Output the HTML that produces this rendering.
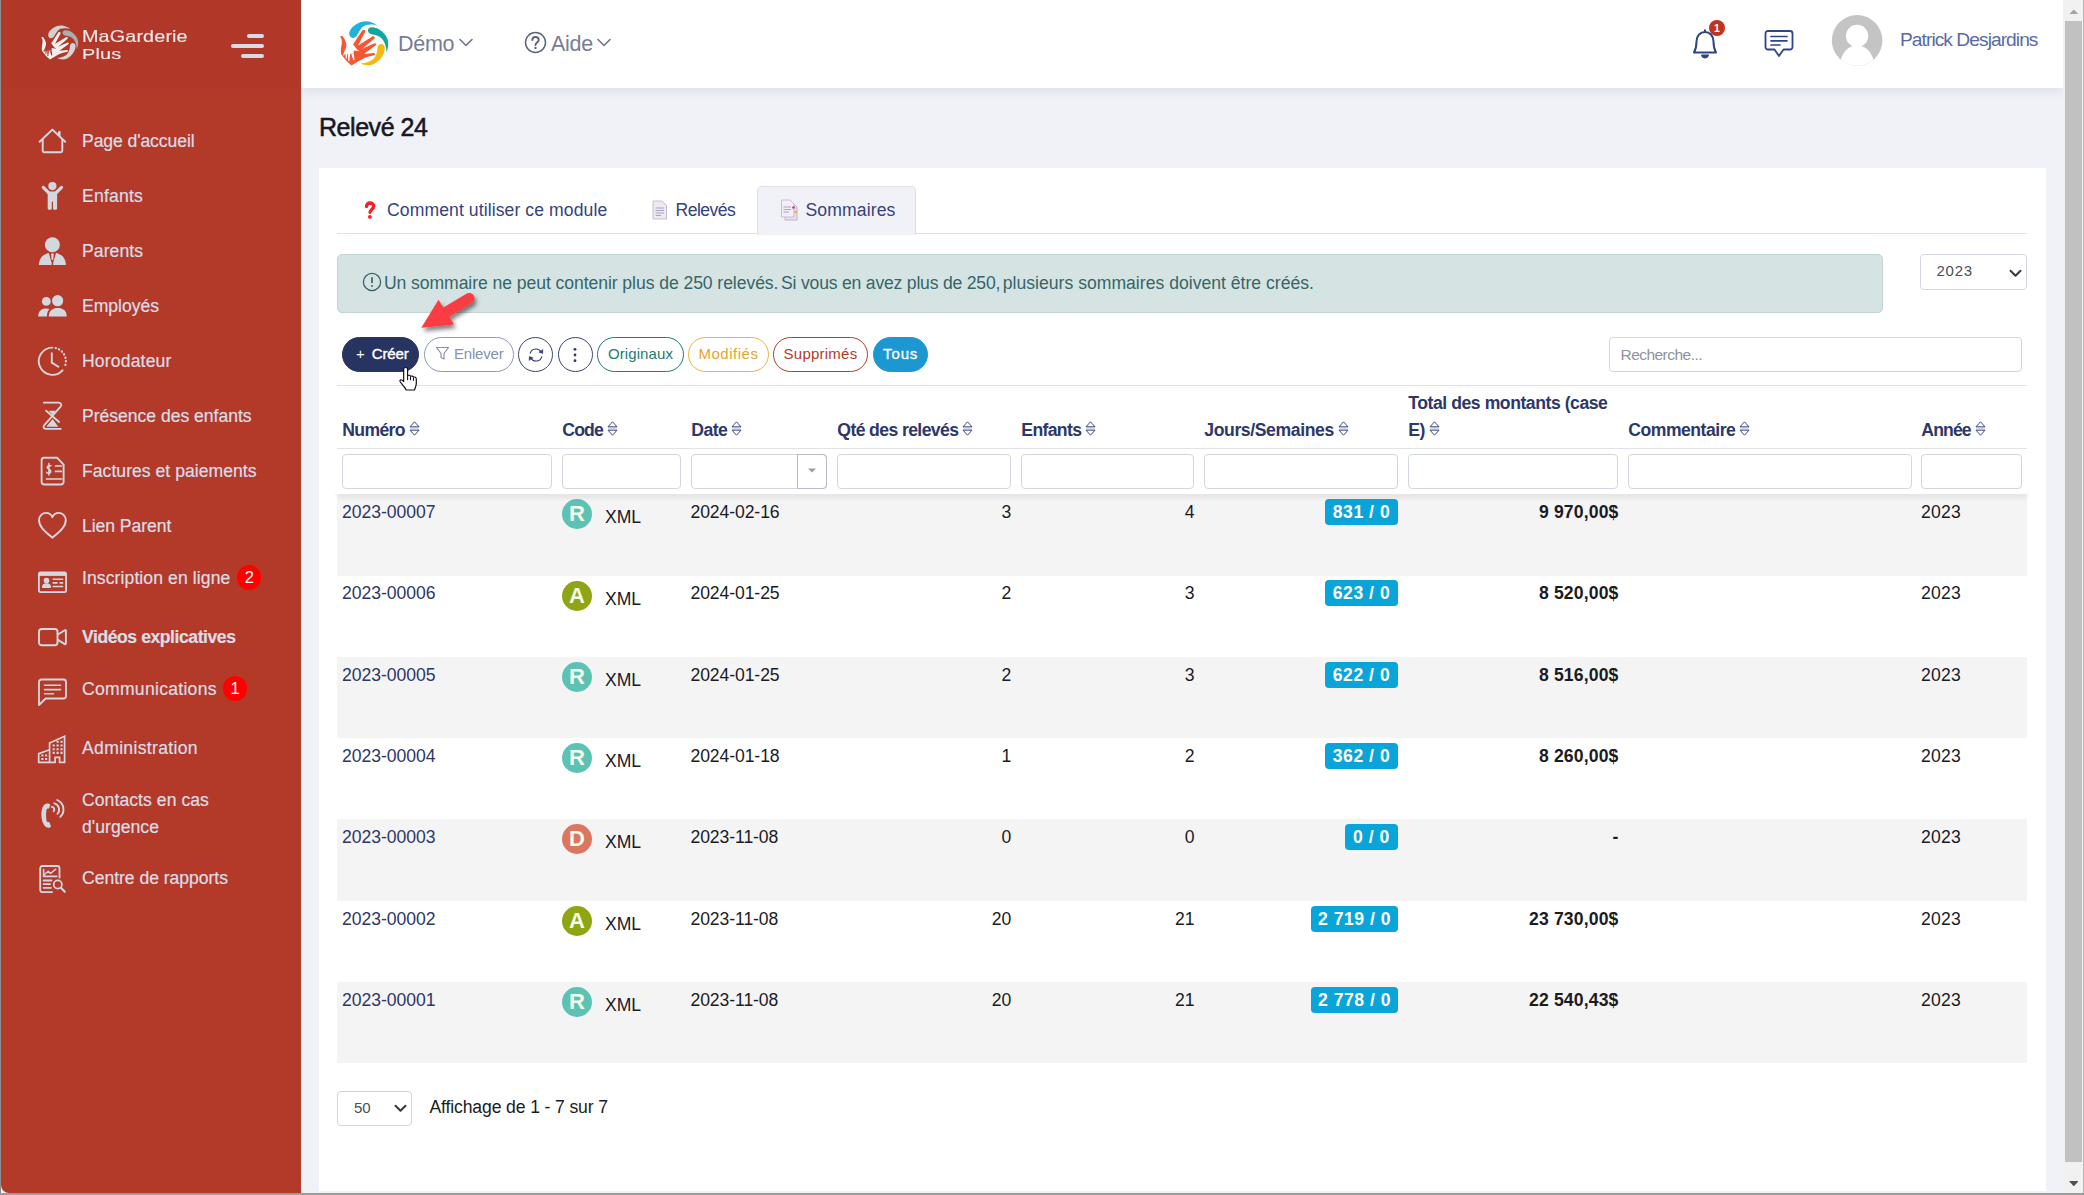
<!DOCTYPE html>
<html lang="fr">
<head>
<meta charset="utf-8">
<title>Relevé 24</title>
<style>
*{box-sizing:border-box;margin:0;padding:0}
html,body{width:2084px;height:1195px;overflow:hidden;background:#f1f2f7;font-family:"Liberation Sans",sans-serif;}
body{position:relative}
.abs{position:absolute}
/* window edges */
#edgeL{left:0;top:0;width:1px;height:1195px;background:#8d8f92}
#edgeR{left:2083px;top:0;width:1px;height:1195px;background:#b9b9b9}
#edgeB{left:0;top:1193px;width:2084px;height:2px;background:#9c9c9c}
/* sidebar */
#side{left:1px;top:0;width:300px;height:1193px;background:#b33a29;border-bottom-left-radius:8px}
#sideTop{left:1px;top:0;width:300px;height:88px;background:#b13828}
.mi{position:absolute;left:82px;color:#dadde7;-webkit-text-stroke:.2px #dadde7;font-size:17.6px;white-space:nowrap;line-height:27px;letter-spacing:-0.25px}
.mi b{font-weight:700}
.ic{position:absolute}
.bdg{position:absolute;width:24px;height:25px;border-radius:12.500px;background:#ff0000;color:#fff;font-size:16.500px;line-height:25px;text-align:center}
/* header */
#hdr{left:301px;top:0;width:1762px;height:88px;background:#fff;box-shadow:0 2px 12px rgba(60,70,110,.13)}
.ht{position:absolute;color:#787d93;font-size:22px;white-space:nowrap;line-height:26px}
/* scrollbar */
#sbTrack{left:2063px;top:0;width:21px;height:1192px;background:#f1f1f1}
#sbThumb{left:2065px;top:21px;width:17px;height:1141px;background:#c1c1c1}
/* content */
#title{left:319px;top:110.500px;font-size:25px;line-height:32px;color:#181823;font-weight:400;-webkit-text-stroke:.55px #181823;white-space:nowrap;letter-spacing:-0.45px}
#card{left:319px;top:168px;width:1727px;height:1023px;background:#fff}
</style>
</head>
<body>
<div id="card" class="abs"></div>
<div id="hdr" class="abs"></div>
<div id="side" class="abs"></div>
<div id="sideTop" class="abs"></div>
<div id="sbTrack" class="abs"></div>
<div id="sbThumb" class="abs"></div>
<!--SIDEBAR-->
<!-- sidebar logo -->
<svg class="abs" style="left:34.630px;top:20.090px" width="49.150" height="44.540" viewBox="0 0 64 58">
<path d="M17.200 19.600 C17.500 15 22 10.500 29 7.900 C33 6.600 38 7 41.700 9.200 C43.500 10.200 44.600 11 45.400 11.900 C42.500 10.300 37 10.200 33 11.500 C29.500 13 27.500 17 25.200 21 C24 23.300 21.500 24.600 19.500 23.500 C18 22.700 17.100 21.300 17.200 19.600Z" fill="#cfd0d0"/>
<path d="M35.900 16.500 C35.900 14.500 37.500 13.200 39.500 13.200 C46 13.300 52 17.500 54.800 23.500 C57 28 56.500 34 54.400 38.100 C54.300 33 53 28 50 24.700 C47 21.500 43 20.800 39.500 20.200 C37.500 19.800 35.900 18.500 35.900 16.500Z" fill="#a9adae"/>
<path d="M49 30 C51 30 52.800 31.500 52.800 34 C52.800 40 48.500 46.500 42 50 C37.500 52.200 32 51.300 28.600 49.500 C33 49.300 38 47.800 41.500 44.800 C44.500 42 45.200 38 45.500 34 C45.700 31.800 47 30 49 30Z" fill="#d4d4d4"/>
<path d="M9.200 22.100 C10 21.700 11 22.400 11.500 23.400 C13.500 26.500 14.600 29.500 14.300 31.800 C14 34.500 12.500 37.500 11.400 40.300 L21.600 39.800 L21.800 36.400 L27.700 37.300 C26 36.500 24.500 35 23.500 33.500 L21.100 30.300 L30.400 16.200 C31.200 15 33.900 16 33.300 17.500 L26 31.400 L40.800 22.300 C42 21.600 43.500 23.500 42.500 24.500 L30.200 34.800 L42.500 29.300 C44 28.800 44.800 30.800 43.500 31.500 L31.800 40 L41.700 39 C43.300 38.900 43.500 41 41.900 41.300 L34 43.200 C31 44.500 28.500 46 26.700 47.100 L19.400 51.500 L14.100 46.600 L9.200 40.300 C8.500 37 9 33 9.800 29.500 C10.200 27 9.500 24.500 8.300 23.100 C8.300 22.600 8.700 22.200 9.200 22.100Z" fill="#f1f0f0"/>
<path d="M11.200 40 L12.900 38.800 L12.300 41.300 L11.300 41.800Z M13.400 39.200 L15.400 39.400 L14.800 44.400 L13.800 44.400Z M16 39.600 L18.200 39.600 L17.300 46.900 L16.200 46.900Z M19.400 39.900 L21.700 39.700 L22.600 45.800 L21.200 46.200Z" fill="#b13828"/>
</svg>
<div class="abs" style="left:82px;top:28.200px;color:#ece6e6;font-size:16.500px;line-height:16.300px;letter-spacing:.1px;-webkit-text-stroke:.15px #ece6e6;transform-origin:0 0;transform:scaleX(1.2);white-space:nowrap">MaGarderie</div>
<div class="abs" style="left:82px;top:45.600px;color:#ece6e6;font-size:15.300px;line-height:16px;letter-spacing:.1px;-webkit-text-stroke:.15px #ece6e6;transform-origin:0 0;transform:scaleX(1.3);white-space:nowrap">Plus</div>
<div class="abs" style="left:247px;top:34px;width:17px;height:4px;border-radius:2px;background:#d5dce6"></div>
<div class="abs" style="left:231px;top:44px;width:33px;height:4px;border-radius:2px;background:#d5dce6"></div>
<div class="abs" style="left:241px;top:54px;width:23px;height:4px;border-radius:2px;background:#d5dce6"></div>

<!-- menu text -->
<div class="mi" style="top:128px;letter-spacing:-0.099px">Page d'accueil</div>
<div class="mi" style="top:183px;letter-spacing:0.188px">Enfants</div>
<div class="mi" style="top:238px;letter-spacing:0.077px">Parents</div>
<div class="mi" style="top:293px;letter-spacing:-0.036px">Employés</div>
<div class="mi" style="top:348px;letter-spacing:0.152px">Horodateur</div>
<div class="mi" style="top:403px;letter-spacing:-0.031px">Présence des enfants</div>
<div class="mi" style="top:458px;letter-spacing:0.026px">Factures et paiements</div>
<div class="mi" style="top:513px;letter-spacing:-0.07px">Lien Parent</div>
<div class="mi" style="top:565px;letter-spacing:0.083px">Inscription en ligne</div>
<div class="mi" style="top:624px;letter-spacing:-0.446px;font-weight:700">Vidéos explicatives</div>
<div class="mi" style="top:676px;letter-spacing:0.267px">Communications</div>
<div class="mi" style="top:735px;letter-spacing:0.317px">Administration</div>
<div class="mi" style="top:787px;letter-spacing:0.053px">Contacts en cas</div>
<div class="mi" style="top:814px;letter-spacing:0.033px">d'urgence</div>
<div class="mi" style="top:865px;letter-spacing:-0.041px">Centre de rapports</div>

<div class="bdg" style="left:237.300px;top:564.800px">2</div>
<div class="bdg" style="left:223px;top:675.800px">1</div>

<!-- icons -->
<!-- home -->
<svg class="ic" style="left:37px;top:126px" width="31" height="30" viewBox="0 0 31 30" fill="none" stroke="#d3d7e0" stroke-width="1.900" stroke-linejoin="round" stroke-linecap="round">
  <path d="M2.600 15.800 L15.400 3.600 L28.200 15.800"/><path d="M5.700 13.500 V24.800 A1.500 1.500 0 0 0 7.200 26.300 H23.800 A1.500 1.500 0 0 0 25.300 24.800 V13.500"/><path d="M22.300 9.800 V5.200" stroke-width="2.600" stroke-linecap="butt"/>
</svg>
<!-- child -->
<svg class="ic" style="left:37px;top:181px" width="31" height="30" viewBox="0 0 31 30" fill="#d3d7e0">
  <circle cx="15.400" cy="5.100" r="4.100"/>
  <path d="M6.300 6.400 L12.500 12.600 M24.500 6.400 L18.300 12.600" stroke="#d3d7e0" stroke-width="3.200" stroke-linecap="round"/>
  <path d="M10.700 10.500 H20.100 V27.400 A1.400 1.400 0 0 1 18.700 28.800 H17.400 A1.400 1.400 0 0 1 16 27.400 V20.700 H14.800 V27.400 A1.400 1.400 0 0 1 13.400 28.800 H12.100 A1.400 1.400 0 0 1 10.700 27.400Z"/>
</svg>
<!-- parent -->
<svg class="ic" style="left:37px;top:236px" width="31" height="30" viewBox="0 0 31 30" fill="#d3d7e0">
  <circle cx="15.400" cy="8.700" r="7.500"/>
  <path d="M1.900 29 C2.400 21 6.400 18.300 11.800 17 L14.600 26.800 V29Z"/>
  <path d="M28.900 29 C28.400 21 24.400 18.300 19 17 L16.200 26.800 V29Z"/>
  <path d="M14 17.400 H16.800 L16.200 24 H14.600Z"/>
</svg>
<!-- employees -->
<svg class="ic" style="left:37px;top:291px" width="32" height="30" viewBox="0 0 32 30" fill="#d3d7e0">
  <circle cx="9.300" cy="10.400" r="4.400"/>
  <circle cx="20.600" cy="9.700" r="5.600"/>
  <path d="M11.800 25.400 C11.800 19.500 15.500 16.900 20.700 16.900 C26 16.900 29.700 19.500 29.700 25.400Z"/>
  <path d="M1.200 25.400 C1.200 20 4.500 17.400 9.300 17.400 C10.500 17.400 11.600 17.600 12.500 17.900 C10.700 19.600 10 22 9.900 25.400Z"/>
</svg>
<!-- clock -->
<svg class="ic" style="left:37px;top:346px" width="31" height="31" viewBox="0 0 31 31" fill="none" stroke="#d3d7e0" stroke-width="1.900" stroke-linecap="round">
  <path d="M15.400 1.600 A13.600 13.600 0 1 0 25.500 24.300"/>
  <path d="M18.600 2 A13.600 13.600 0 0 1 27.400 21.500" stroke-dasharray="0.300 3.250" stroke-width="2.200"/>
  <path d="M14.800 7.200 V16.600 L21.400 20.700"/>
</svg>
<!-- hourglass -->
<svg class="ic" style="left:37px;top:401px" width="30" height="30" viewBox="0 0 30 30" fill="none" stroke="#d3d7e0" stroke-width="1.800" stroke-linejoin="round" stroke-linecap="round">
  <path d="M6.800 1.700 H21.500 C24 1.700 25 3.600 23.800 5.300 L7.100 24.300 C5.800 26 6.800 27.900 9 27.900 H23.800"/>
  <path d="M9.100 9.700 L22.100 21"/>
  <path d="M11.800 9.700 H19.100 L15.600 14.100Z M15.600 18.100 L21.300 25.800 H9.300Z" fill="#d3d7e0" stroke="none"/>
</svg>
<!-- invoice -->
<svg class="ic" style="left:37px;top:456px" width="31" height="30" viewBox="0 0 31 30" fill="none" stroke="#d3d7e0" stroke-width="1.900" stroke-linejoin="round" stroke-linecap="round">
  <path d="M7.100 1.700 H20 L26.600 8.600 V26 A2.500 2.500 0 0 1 24.100 28.500 H7.100 A2.500 2.500 0 0 1 4.600 26 V4.200 A2.500 2.500 0 0 1 7.100 1.700Z"/>
  <path d="M9.500 23 H24.500" stroke-width="1.700"/><path d="M18.500 10 H24.300 M18.500 15.400 H24.300" stroke-width="1.700"/>
  <path d="M14 9.800 C11.200 8.600 9.300 10.800 10.800 12.500 C12 13.500 14.300 14 13.600 16.200 C12.800 17.800 10.300 17.600 9.600 16.400 M11.900 7.400 V19" stroke-width="1.500"/>
</svg>
<!-- heart -->
<svg class="ic" style="left:37px;top:511px" width="31" height="30" viewBox="0 0 31 30" fill="none" stroke="#d3d7e0" stroke-width="1.900" stroke-linejoin="round">
  <path d="M15.400 26.800 C10 22 2 16.500 2 9.300 C2 4.600 5.600 1.900 9 1.900 C11.800 1.900 14.200 3.500 15.400 6.200 C16.600 3.500 19 1.900 21.800 1.900 C25.200 1.900 28.800 4.600 28.800 9.300 C28.800 16.500 20.800 22 15.400 26.800Z"/>
</svg>
<!-- id card -->
<svg class="ic" style="left:37px;top:566px" width="31" height="30" viewBox="0 0 31 30" fill="none" stroke="#d3d7e0" stroke-width="1.800" stroke-linejoin="round">
  <rect x="1.900" y="6.400" width="27.200" height="19.800" rx="1.600"/>
  <path d="M1.900 8.400 H29.100" stroke-width="3"/>
  <circle cx="9.500" cy="14.600" r="2.800" fill="#d3d7e0" stroke="none"/>
  <path d="M4.900 21.300 C4.900 18.400 6.600 17.200 9.500 17.200 C12.400 17.200 14.100 18.400 14.100 21.300 A.8 .8 0 0 1 13.300 22.100 H5.700 A.8 .8 0 0 1 4.900 21.300Z" fill="#d3d7e0" stroke="none"/>
  <path d="M15.600 13.200 H26.200 M15.600 16.900 H20.500 M22.500 16.900 H26.200 M15.600 20.500 H26.200" stroke-width="1.600"/>
</svg>
<!-- video -->
<svg class="ic" style="left:37px;top:622px" width="31" height="30" viewBox="0 0 31 30" fill="none" stroke="#d3d7e0" stroke-width="1.900" stroke-linejoin="round">
  <rect x="2" y="7" width="18.500" height="16.300" rx="2.800"/>
  <path d="M20.500 12.700 L27.800 8.200 C28.300 7.900 28.900 8.200 28.900 8.700 V21.600 C28.900 22.100 28.300 22.400 27.800 22.100 L20.500 17.600"/>
</svg>
<!-- chat -->
<svg class="ic" style="left:37px;top:677px" width="31" height="30" viewBox="0 0 31 30" fill="none" stroke="#d3d7e0" stroke-width="1.800" stroke-linejoin="round" stroke-linecap="round">
  <path d="M4.500 2.500 H26.500 A2.500 2.500 0 0 1 29 5 V19 A2.500 2.500 0 0 1 26.500 21.500 H8.700 L2 28 V5 A2.500 2.500 0 0 1 4.500 2.500Z"/>
  <path d="M7.500 8.300 H23.500 M7.500 12.600 H23.500 M7.500 16.800 H16.500" stroke-width="1.600"/>
</svg>
<!-- buildings -->
<svg class="ic" style="left:37px;top:733.700px" width="30" height="30" viewBox="0 0 30 30" fill="none" stroke="#d3d7e0" stroke-width="1.700" stroke-linejoin="miter">
  <path d="M12.600 28.300 V9 L27.600 2.200 V28.300 H22.600 V23.300 H18.100 V28.300Z"/>
  <path d="M12.600 15.800 L1.700 19.600 V28.300 H12.600"/>
  <path d="M15.600 11.500 h2.200 M19.500 11.500 h2.200 M23.400 11.500 h2.200 M15.600 15.200 h2.200 M19.500 15.200 h2.200 M23.400 15.200 h2.200 M15.600 18.900 h2.200 M19.500 18.900 h2.200 M23.400 18.900 h2.200 M19.500 7.800 h2.200 M23.400 7.800 h2.200 M4.300 21.500 h2.200 M8 21.500 h2.200 M4.300 25 h2.200 M8 25 h2.200" stroke-width="2.100"/>
</svg>
<!-- phone -->
<svg class="ic" style="left:37px;top:798px" width="31" height="32" viewBox="0 0 31 32" fill="none" stroke="#d3d7e0" stroke-width="1.900" stroke-linecap="round">
  <path d="M10 5.600 C6.500 6 4.400 10.500 4.400 16.500 C4.400 23 6.800 28.500 10.300 29.600 C11.800 30 13.400 29.600 14 28.500 L12.200 23.800 C11.200 24.500 10 24.200 9.600 22.800 C8.900 20 8.900 14.500 9.600 11.800 C9.900 10.700 11 10.300 12 10.800 L13.300 6.400 C12.600 5.800 11.200 5.500 10 5.600Z" fill="#d3d7e0" stroke="none"/>
  <path d="M14.800 8.900 A2.600 2.600 0 0 1 16.700 13.200"/>
  <path d="M17.300 5.300 A6.400 6.400 0 0 1 20.400 15.800"/>
  <path d="M20.200 2 A10.300 10.300 0 0 1 23.300 18.900"/>
</svg>
<!-- report -->
<svg class="ic" style="left:37px;top:864px" width="31" height="31" viewBox="0 0 31 31" fill="none" stroke="#d3d7e0" stroke-width="1.800" stroke-linejoin="round" stroke-linecap="round">
  <path d="M22.500 13.500 V4.200 A2.200 2.200 0 0 0 20.300 2 H5.400 A2.200 2.200 0 0 0 3.200 4.200 V26 A2.200 2.200 0 0 0 5.400 28.200 H15"/>
  <path d="M6.600 5.500 V12.400 H19.800" stroke-width="1.600"/><path d="M7.500 10.500 L11.200 7.300 L13.500 9.500 L18.800 5.200" stroke-width="1.500"/>
  <path d="M6.600 16.500 H14.500 M6.600 20.200 H13 M6.600 23.800 H14" stroke-width="1.800"/>
  <circle cx="20.800" cy="20.500" r="4.100" stroke-width="1.700"/><path d="M23.900 23.800 L27.800 27.800" stroke-width="2.100"/>
</svg>
<!--/SIDEBAR-->
<!--HEADER-->
<!-- header logo (colour) -->
<svg class="abs" style="left:332px;top:14px" width="64" height="58" viewBox="0 0 64 58">
<path d="M17.200 19.600 C17.500 15 22 10.500 29 7.900 C33 6.600 38 7 41.700 9.200 C43.500 10.200 44.600 11 45.400 11.900 C42.500 10.300 37 10.200 33 11.500 C29.500 13 27.500 17 25.200 21 C24 23.300 21.500 24.600 19.500 23.500 C18 22.700 17.100 21.300 17.200 19.600Z" fill="#22b2d8"/>
<path d="M35.900 16.500 C35.900 14.500 37.500 13.200 39.500 13.200 C46 13.300 52 17.500 54.800 23.500 C57 28 56.500 34 54.400 38.100 C54.300 33 53 28 50 24.700 C47 21.500 43 20.800 39.500 20.200 C37.500 19.800 35.900 18.500 35.900 16.500Z" fill="#0fa7a0"/>
<path d="M49 30 C51 30 52.800 31.500 52.800 34 C52.800 40 48.500 46.500 42 50 C37.500 52.200 32 51.300 28.600 49.500 C33 49.300 38 47.800 41.500 44.800 C44.500 42 45.200 38 45.500 34 C45.700 31.800 47 30 49 30Z" fill="#f5b910"/>
<path d="M9.200 22.100 C10 21.700 11 22.400 11.500 23.400 C13.500 26.500 14.600 29.500 14.300 31.800 C14 34.500 12.500 37.500 11.400 40.300 L21.600 39.800 L21.800 36.400 L27.700 37.300 C26 36.500 24.500 35 23.500 33.500 L21.100 30.300 L30.400 16.200 C31.200 15 33.900 16 33.300 17.500 L26 31.400 L40.800 22.300 C42 21.600 43.500 23.500 42.500 24.500 L30.200 34.800 L42.500 29.300 C44 28.800 44.800 30.800 43.500 31.500 L31.800 40 L41.700 39 C43.300 38.900 43.500 41 41.900 41.300 L34 43.200 C31 44.500 28.500 46 26.700 47.100 L19.400 51.500 L14.100 46.600 L9.200 40.300 C8.500 37 9 33 9.800 29.500 C10.200 27 9.500 24.500 8.300 23.100 C8.300 22.600 8.700 22.200 9.200 22.100Z" fill="#fb5430"/>
<path d="M11.200 40 L12.900 38.800 L12.300 41.300 L11.300 41.800Z M13.400 39.200 L15.400 39.400 L14.800 44.400 L13.800 44.400Z M16 39.600 L18.200 39.600 L17.300 46.900 L16.200 46.900Z M19.400 39.900 L21.700 39.700 L22.600 45.800 L21.200 46.200Z" fill="#ffffff"/>
</svg>
<div class="ht" style="left:398px;top:31px;font-size:21.5px;letter-spacing:-.3px">Démo</div>
<svg class="abs" style="left:458px;top:37px" width="16" height="11" viewBox="0 0 16 11" fill="none" stroke="#6e7389" stroke-width="1.600" stroke-linecap="round" stroke-linejoin="round"><path d="M2 2.500 L8 8.500 L14 2.500"/></svg>
<svg class="abs" style="left:524px;top:31px" width="23" height="23" viewBox="0 0 23 23" fill="none" stroke="#5d637c" stroke-width="1.500"><circle cx="11.500" cy="11.500" r="10"/><path d="M8.300 9 C8.300 5 14.700 5 14.700 9 C14.700 11.500 11.500 11.500 11.500 14" stroke-width="1.900" stroke-linecap="round"/><circle cx="11.500" cy="17" r="1.200" fill="#5d637c" stroke="none"/></svg>
<div class="ht" style="left:551px;top:31px;font-size:21.5px;letter-spacing:-.3px">Aide</div>
<svg class="abs" style="left:596px;top:37px" width="16" height="11" viewBox="0 0 16 11" fill="none" stroke="#6e7389" stroke-width="1.600" stroke-linecap="round" stroke-linejoin="round"><path d="M2 2.500 L8 8.500 L14 2.500"/></svg>

<!-- bell -->
<svg class="abs" style="left:1691px;top:28px" width="28" height="32" viewBox="0 0 28 32" fill="none" stroke="#2f4584" stroke-width="2" stroke-linejoin="round" stroke-linecap="round">
  <path d="M3 24.500 H25 C23 21 22.500 17 22.500 13.500 C22.500 7.500 18.500 4 14 4 C9.500 4 5.500 7.500 5.500 13.500 C5.500 17 5 21 3 24.500Z"/>
  <path d="M14 4 V2.300"/>
  <path d="M11 27.500 C12 30 16 30 17 27.500Z" fill="#2f4584"/>
</svg>
<div class="abs" style="left:1708.800px;top:19.800px;width:16.400px;height:16.400px;border-radius:9px;background:#bf3323;color:#fff;font-size:10.500px;font-weight:700;line-height:16.400px;text-align:center">1</div>
<!-- chat -->
<svg class="abs" style="left:1763px;top:28px" width="32" height="31" viewBox="0 0 32 31" fill="none" stroke="#2f4584" stroke-width="1.800" stroke-linejoin="round" stroke-linecap="round">
  <path d="M5 3 H27 A2.500 2.500 0 0 1 29.500 5.500 V19 A2.500 2.500 0 0 1 27 21.500 H20.500 L16 28 L11.500 21.500 H5 A2.500 2.500 0 0 1 2.500 19 V5.500 A2.500 2.500 0 0 1 5 3Z"/>
  <path d="M8 8.500 H24 M8 12.800 H24 M8 17 H17" stroke-width="1.700"/>
</svg>
<!-- avatar -->
<svg class="abs" style="left:1831px;top:15px" width="52" height="52" viewBox="0 0 52 52">
  <defs><clipPath id="av"><circle cx="26.100" cy="25.400" r="25.300"/></clipPath></defs>
  <circle cx="26.100" cy="25.400" r="25.300" fill="#c4c4c4"/>
  <g clip-path="url(#av)"><circle cx="26.100" cy="20.900" r="11.100" fill="#fff"/><path d="M8.500 56 C8.500 40 15 30.800 26.100 30.800 C37.200 30.800 43.700 40 43.700 56Z" fill="#fff"/></g>
</svg>
<div class="abs" style="left:1900px;top:28px;font-size:19.200px;line-height:24px;color:#5a6ba4;white-space:nowrap;letter-spacing:-.95px">Patrick Desjardins</div>
<!-- scrollbar arrows -->
<svg class="abs" style="left:2068.700px;top:8.600px" width="9.600" height="5.400" viewBox="0 0 13 7" preserveAspectRatio="none"><path d="M0 7 L6.500 0.500 L13 7Z" fill="#a3a3a3"/></svg>
<svg class="abs" style="left:2068.700px;top:1180.800px" width="9.600" height="5.400" viewBox="0 0 11 6" preserveAspectRatio="none"><path d="M0 0 L5.500 6 L11 0Z" fill="#505050"/></svg>
<!--/HEADER-->
<div id="title" class="abs">Relevé 24</div>
<!--TABS-->

<style>
.tab{position:absolute;top:186px;height:48px;font-size:17.600px;line-height:48px;color:#36427b;white-space:nowrap}
#tabline{left:337px;top:233px;width:1690px;height:1px;background:#dfe2ea}
#tabact{left:757px;top:186px;width:159px;height:49px;background:#f1f2f7;border:1px solid #dcdfe8;border-bottom:none;border-radius:5px 5px 0 0}
#alert{left:337px;top:254px;width:1546px;height:59px;background:#d5e4e2;border:1px solid #bfd6d2;border-radius:5px}
.atx{top:269.500px;font-size:17.600px;line-height:27px;color:#36656a;white-space:nowrap}
.sel{position:absolute;background:#fff;border:1px solid #d3d6de;border-radius:4px;color:#4a4f57;font-size:15px}
.btn{position:absolute;top:337px;height:35px;border-radius:18px;font-size:15px;line-height:31.500px;text-align:center;white-space:nowrap;border:1px solid;background:#fff}
#search{left:1609px;top:337px;width:413px;height:35px;border:1px solid #d3d6de;border-radius:4px;background:#fff;color:#8e939c;font-size:15.500px;line-height:34px;padding-left:10.500px}
.hl{position:absolute;left:337px;width:1690px;height:1px;background:#dfe2ea}
.th{position:absolute;font-size:17.600px;font-weight:700;color:#2d3769;white-space:nowrap;line-height:27px}
.th .si{margin-left:4px;vertical-align:-.3px;letter-spacing:0}
.fi{position:absolute;top:454px;height:35px;border:1px solid #d3d6de;border-radius:4px;background:#fff}
.row{position:absolute;left:337px;width:1690px;background:#f4f4f4}
.td{position:absolute;font-size:17.600px;line-height:26px;color:#1b1b24;white-space:nowrap}
.td.r{text-align:right}
.td.b{font-weight:700}
.num{color:#2d3769}
.circ{position:absolute;left:562px;width:30px;height:30px;border-radius:15px;color:#f3fbe9;font-weight:700;font-size:22px;line-height:30.500px;text-align:center}
.bd{position:absolute;height:26px;border-radius:4px;background:#0aa5d8;color:#fff;font-weight:700;font-size:17.600px;line-height:26.500px;text-align:center;white-space:nowrap}
#hshadow{left:337px;top:490px;width:1690px;height:4px;box-shadow:0 3px 5px rgba(0,0,0,.1);background:#fff}
</style>

<div id="tabline" class="abs"></div>
<div id="tabact" class="abs"></div>
<svg class="abs" style="left:363px;top:200px" width="14" height="20" viewBox="0 0 14 20" fill="none"><path d="M3.500 6.500 C3.500 4.200 5 3 7 3 C9.200 3 10.700 4.400 10.700 6.300 C10.700 9.300 7 9.600 7 12.300" stroke="#fb1f24" stroke-width="3.300" stroke-linecap="round"/><circle cx="6.900" cy="16.900" r="1.900" fill="#fb1f24"/></svg>
<div class="tab" style="left:387px;letter-spacing:0.086px">Comment utiliser ce module</div>
<svg class="abs" style="left:651px;top:200px" width="17" height="20" viewBox="0 0 17 20"><path d="M2 1 H11 L15.500 5.500 V19 H2Z" fill="#efe9f4" stroke="#c6bdd4" stroke-width="1"/><path d="M4.500 8 H13 M4.500 10.500 H13 M4.500 13 H13 M4.500 15.500 H10" stroke="#a9a4bb" stroke-width="1"/></svg>
<div class="tab" style="left:675.500px;letter-spacing:-0.530px">Relevés</div>
<svg class="abs" style="left:780px;top:199px" width="19" height="22" viewBox="0 0 19 22"><path d="M5 4 H13 L17 8 V21 H5Z" fill="#e7dfee" stroke="#bcb2cb" stroke-width="1"/><path d="M1.500 1 H10 L14 5 V18 H1.500Z" fill="#f2edf6" stroke="#c6bdd4" stroke-width="1"/><path d="M3.500 8 H11 M3.500 10.500 H11 M3.500 13 H9" stroke="#a9a4bb" stroke-width="1"/><circle cx="13.500" cy="8.500" r="1.300" fill="#e0218a"/><circle cx="15.500" cy="13" r="1.300" fill="#f5b21a"/></svg>
<div class="tab" style="left:805.500px;letter-spacing:0.116px">Sommaires</div>
<!--/TABS-->
<!--ALERT-->

<div id="alert" class="abs"></div>
<svg class="abs" style="left:362px;top:272px" width="20" height="20" viewBox="0 0 20 20" fill="none" stroke="#36656a" stroke-width="1.300"><circle cx="10" cy="10" r="8.600"/><path d="M10 5.200 V11" stroke-width="1.700"/><circle cx="10" cy="14" r="1" fill="#36656a" stroke="none"/></svg>
<div class="abs atx" style="left:383.900px;letter-spacing:-0.072px">Un sommaire ne peut contenir plus de 250 relevés.</div>
<div class="abs atx" style="left:781.100px;letter-spacing:-0.210px">Si vous en avez plus de 250,</div>
<div class="abs atx" style="left:1002.800px;letter-spacing:0.006px">plusieurs sommaires doivent être créés.</div>
<div class="sel" style="left:1920px;top:254px;width:107px;height:36px;line-height:31.500px;padding-left:15.500px;letter-spacing:0.742px">2023</div>
<svg class="abs" style="left:2008.500px;top:268.500px" width="13" height="9" viewBox="0 0 13 9" fill="none" stroke="#343a40" stroke-width="2" stroke-linecap="round" stroke-linejoin="round"><path d="M1.500 1.800 L6.500 6.800 L11.500 1.800"/></svg>
<!--/ALERT-->
<!--TOOLBAR-->

<div class="btn" style="left:342px;width:77px;background:#273360;border-color:#273360;color:#fff;text-align:left;padding-left:13px"><span style="font-size:15px;margin-right:7px">+</span><span style="-webkit-text-stroke:.4px #fff;letter-spacing:-0.141px">Créer</span></div>
<div class="btn" style="left:424px;width:90px;border-color:#8f97bd;color:#8a90b0;text-align:left;padding-left:29px;letter-spacing:-0.186px">Enlever</div>
<svg class="abs" style="left:434.600px;top:346px" width="15" height="15" viewBox="0 0 15 15" fill="none" stroke="#8a90b0" stroke-width="1.200" stroke-linejoin="round"><path d="M1.500 1.500 H13.500 L9 7.500 V13 L6 11.500 V7.500Z"/></svg>
<div class="btn" style="left:518px;width:35px;border-color:#3b4478"></div>
<svg class="abs" style="left:526px;top:345px" width="20" height="20" viewBox="0 0 20 20" fill="none" stroke="#2d3769" stroke-width="1.100" stroke-linecap="round"><path d="M4.200 8.200 A6 6 0 0 1 15.300 7.300"/><path d="M15.800 11.800 A6 6 0 0 1 4.700 12.700"/><path d="M13.200 7.200 L16.600 8.400 L16.900 4.900Z" fill="#2d3769" stroke-width=".6"/><path d="M6.800 12.800 L3.400 11.600 L3.100 15.100Z" fill="#2d3769" stroke-width=".6"/></svg>
<div class="btn" style="left:558px;width:35px;border-color:#3b4478"></div>
<svg class="abs" style="left:572px;top:346px" width="6" height="18" viewBox="0 0 6 18" fill="#2d3769"><circle cx="3" cy="3.300" r="1.400"/><circle cx="3" cy="9" r="1.400"/><circle cx="3" cy="14.700" r="1.400"/></svg>
<div class="btn" style="left:597px;width:87px;border-color:#1f7a74;color:#1f7a74;letter-spacing:0.087px">Originaux</div>
<div class="btn" style="left:688px;width:81px;border-color:#eab839;color:#e5a531;letter-spacing:0.520px">Modifiés</div>
<div class="btn" style="left:773px;width:95px;border-color:#b7392b;color:#b7392b;letter-spacing:0.237px">Supprimés</div>
<div class="btn" style="left:873px;width:55.300px;background:#1d97d2;border-color:#1d97d2;color:#fff"><span style="-webkit-text-stroke:.3px #fff;letter-spacing:0.871px">Tous</span></div>
<div id="search" class="abs" style="letter-spacing:-0.536px">Recherche...</div>
<div class="hl" style="top:385px"></div>
<!--/TOOLBAR-->
<!--TABLE-->
<div class="th" style="left:342.3px;top:416.700px"><span style="letter-spacing:-0.657px">Numéro</span><svg class="si" width="11" height="15" viewBox="0 0 11 15" fill="none" stroke="#3d4882" stroke-width="1"><rect x="1" y="6.300" width="9" height="2.400" fill="#dcdce3" stroke="none"/><path d="M1 5.800 L5.500 0.800 L10 5.800Z"/><path d="M1 9.200 L5.500 14.200 L10 9.200Z"/></svg></div>
<div class="th" style="left:562.3px;top:416.700px"><span style="letter-spacing:-0.861px">Code</span><svg class="si" width="11" height="15" viewBox="0 0 11 15" fill="none" stroke="#3d4882" stroke-width="1"><rect x="1" y="6.300" width="9" height="2.400" fill="#dcdce3" stroke="none"/><path d="M1 5.800 L5.500 0.800 L10 5.800Z"/><path d="M1 9.200 L5.500 14.200 L10 9.200Z"/></svg></div>
<div class="th" style="left:691.3px;top:416.700px"><span style="letter-spacing:-0.580px">Date</span><svg class="si" width="11" height="15" viewBox="0 0 11 15" fill="none" stroke="#3d4882" stroke-width="1"><rect x="1" y="6.300" width="9" height="2.400" fill="#dcdce3" stroke="none"/><path d="M1 5.800 L5.500 0.800 L10 5.800Z"/><path d="M1 9.200 L5.500 14.200 L10 9.200Z"/></svg></div>
<div class="th" style="left:837.3px;top:416.700px"><span style="letter-spacing:-0.600px">Qté des relevés</span><svg class="si" width="11" height="15" viewBox="0 0 11 15" fill="none" stroke="#3d4882" stroke-width="1"><rect x="1" y="6.300" width="9" height="2.400" fill="#dcdce3" stroke="none"/><path d="M1 5.800 L5.500 0.800 L10 5.800Z"/><path d="M1 9.200 L5.500 14.200 L10 9.200Z"/></svg></div>
<div class="th" style="left:1021.3px;top:416.700px"><span style="letter-spacing:-0.639px">Enfants</span><svg class="si" width="11" height="15" viewBox="0 0 11 15" fill="none" stroke="#3d4882" stroke-width="1"><rect x="1" y="6.300" width="9" height="2.400" fill="#dcdce3" stroke="none"/><path d="M1 5.800 L5.500 0.800 L10 5.800Z"/><path d="M1 9.200 L5.500 14.200 L10 9.200Z"/></svg></div>
<div class="th" style="left:1204.3px;top:416.700px"><span style="letter-spacing:-0.389px">Jours/Semaines</span><svg class="si" width="11" height="15" viewBox="0 0 11 15" fill="none" stroke="#3d4882" stroke-width="1"><rect x="1" y="6.300" width="9" height="2.400" fill="#dcdce3" stroke="none"/><path d="M1 5.800 L5.500 0.800 L10 5.800Z"/><path d="M1 9.200 L5.500 14.200 L10 9.200Z"/></svg></div>
<div class="th" style="left:1408.3px;top:389.700px"><span style="letter-spacing:-0.447px">Total des montants (case</span><br><span style="letter-spacing:-0.594px">E)</span><svg class="si" width="11" height="15" viewBox="0 0 11 15" fill="none" stroke="#3d4882" stroke-width="1"><rect x="1" y="6.300" width="9" height="2.400" fill="#dcdce3" stroke="none"/><path d="M1 5.800 L5.500 0.800 L10 5.800Z"/><path d="M1 9.200 L5.500 14.200 L10 9.200Z"/></svg></div>
<div class="th" style="left:1628.3px;top:416.700px"><span style="letter-spacing:-0.494px">Commentaire</span><svg class="si" width="11" height="15" viewBox="0 0 11 15" fill="none" stroke="#3d4882" stroke-width="1"><rect x="1" y="6.300" width="9" height="2.400" fill="#dcdce3" stroke="none"/><path d="M1 5.800 L5.500 0.800 L10 5.800Z"/><path d="M1 9.200 L5.500 14.200 L10 9.200Z"/></svg></div>
<div class="th" style="left:1921.3px;top:416.700px"><span style="letter-spacing:-0.870px">Année</span><svg class="si" width="11" height="15" viewBox="0 0 11 15" fill="none" stroke="#3d4882" stroke-width="1"><rect x="1" y="6.300" width="9" height="2.400" fill="#dcdce3" stroke="none"/><path d="M1 5.800 L5.500 0.800 L10 5.800Z"/><path d="M1 9.200 L5.500 14.200 L10 9.200Z"/></svg></div>
<div class="hl" style="top:448px"></div>
<div class="fi" style="left:342px;width:210px"></div>
<div class="fi" style="left:562px;width:119px"></div>
<div class="fi" style="left:691px;width:136px"></div>
<div class="fi" style="left:837px;width:174px"></div>
<div class="fi" style="left:1021px;width:173px"></div>
<div class="fi" style="left:1204px;width:194px"></div>
<div class="fi" style="left:1408px;width:210px"></div>
<div class="fi" style="left:1628px;width:284px"></div>
<div class="fi" style="left:1921px;width:101px"></div>
<div class="abs" style="left:797px;top:454px;width:30px;height:35px;border:1px solid #b9bcc6;border-radius:0 4px 4px 0"></div>
<svg class="abs" style="left:808px;top:467.600px" width="8" height="5" viewBox="0 0 8 5"><path d="M0 0.500 H8 L4 4.500Z" fill="#9a9da6"/></svg>
<div class="row" style="top:494px;height:81.5px"></div>
<div class="td num" style="left:342px;top:498.8px;letter-spacing:-0.037px">2023-00007</div>
<div class="circ" style="top:499px;background:#5bc2b4">R</div>
<div class="td" style="left:605px;top:504.0px;letter-spacing:-0.044px">XML</div>
<div class="td" style="left:690.500px;top:498.8px;letter-spacing:-0.100px">2024-02-16</div>
<div class="td r" style="left:837px;width:174.300px;top:498.8px">3</div>
<div class="td r" style="left:1021px;width:173.500px;top:498.8px">4</div>
<div class="bd" style="left:1325px;width:73px;top:498.9px;letter-spacing:0.515px">831 / 0</div>
<div class="td r b" style="left:1408px;width:210.500px;top:498.8px;letter-spacing:0.140px">9 970,00$</div>
<div class="td" style="left:1921px;top:498.8px;letter-spacing:0.220px">2023</div>
<div class="td num" style="left:342px;top:580.3px;letter-spacing:-0.037px">2023-00006</div>
<div class="circ" style="top:580.5px;background:#8fa513">A</div>
<div class="td" style="left:605px;top:585.5px;letter-spacing:-0.044px">XML</div>
<div class="td" style="left:690.500px;top:580.3px;letter-spacing:-0.100px">2024-01-25</div>
<div class="td r" style="left:837px;width:174.300px;top:580.3px">2</div>
<div class="td r" style="left:1021px;width:173.500px;top:580.3px">3</div>
<div class="bd" style="left:1325px;width:73px;top:580.4px;letter-spacing:0.515px">623 / 0</div>
<div class="td r b" style="left:1408px;width:210.500px;top:580.3px;letter-spacing:0.140px">8 520,00$</div>
<div class="td" style="left:1921px;top:580.3px;letter-spacing:0.220px">2023</div>
<div class="row" style="top:657px;height:81px"></div>
<div class="td num" style="left:342px;top:661.8px;letter-spacing:-0.037px">2023-00005</div>
<div class="circ" style="top:662px;background:#5bc2b4">R</div>
<div class="td" style="left:605px;top:667.0px;letter-spacing:-0.044px">XML</div>
<div class="td" style="left:690.500px;top:661.8px;letter-spacing:-0.100px">2024-01-25</div>
<div class="td r" style="left:837px;width:174.300px;top:661.8px">2</div>
<div class="td r" style="left:1021px;width:173.500px;top:661.8px">3</div>
<div class="bd" style="left:1325px;width:73px;top:661.9px;letter-spacing:0.515px">622 / 0</div>
<div class="td r b" style="left:1408px;width:210.500px;top:661.8px;letter-spacing:0.140px">8 516,00$</div>
<div class="td" style="left:1921px;top:661.8px;letter-spacing:0.220px">2023</div>
<div class="td num" style="left:342px;top:742.8px;letter-spacing:-0.037px">2023-00004</div>
<div class="circ" style="top:743px;background:#5bc2b4">R</div>
<div class="td" style="left:605px;top:748.0px;letter-spacing:-0.044px">XML</div>
<div class="td" style="left:690.500px;top:742.8px;letter-spacing:-0.100px">2024-01-18</div>
<div class="td r" style="left:837px;width:174.300px;top:742.8px">1</div>
<div class="td r" style="left:1021px;width:173.500px;top:742.8px">2</div>
<div class="bd" style="left:1325px;width:73px;top:742.9px;letter-spacing:0.515px">362 / 0</div>
<div class="td r b" style="left:1408px;width:210.500px;top:742.8px;letter-spacing:0.140px">8 260,00$</div>
<div class="td" style="left:1921px;top:742.8px;letter-spacing:0.220px">2023</div>
<div class="row" style="top:819.3px;height:81.5px"></div>
<div class="td num" style="left:342px;top:824.0999999999999px;letter-spacing:-0.037px">2023-00003</div>
<div class="circ" style="top:824.3px;background:#dc7660">D</div>
<div class="td" style="left:605px;top:829.3px;letter-spacing:-0.044px">XML</div>
<div class="td" style="left:690.500px;top:824.0999999999999px;letter-spacing:-0.100px">2023-11-08</div>
<div class="td r" style="left:837px;width:174.300px;top:824.0999999999999px">0</div>
<div class="td r" style="left:1021px;width:173.500px;top:824.0999999999999px">0</div>
<div class="bd" style="left:1345px;width:53px;top:824.1999999999999px;letter-spacing:0.515px">0 / 0</div>
<div class="td r b" style="left:1408px;width:210.500px;top:824.0999999999999px;letter-spacing:0.140px">-</div>
<div class="td" style="left:1921px;top:824.0999999999999px;letter-spacing:0.220px">2023</div>
<div class="td num" style="left:342px;top:905.5999999999999px;letter-spacing:-0.037px">2023-00002</div>
<div class="circ" style="top:905.8px;background:#8fa513">A</div>
<div class="td" style="left:605px;top:910.8px;letter-spacing:-0.044px">XML</div>
<div class="td" style="left:690.500px;top:905.5999999999999px;letter-spacing:-0.100px">2023-11-08</div>
<div class="td r" style="left:837px;width:174.300px;top:905.5999999999999px">20</div>
<div class="td r" style="left:1021px;width:173.500px;top:905.5999999999999px">21</div>
<div class="bd" style="left:1311px;width:87px;top:905.6999999999999px;letter-spacing:0.515px">2 719 / 0</div>
<div class="td r b" style="left:1408px;width:210.500px;top:905.5999999999999px;letter-spacing:0.140px">23 730,00$</div>
<div class="td" style="left:1921px;top:905.5999999999999px;letter-spacing:0.220px">2023</div>
<div class="row" style="top:981.8px;height:81.40000000000009px"></div>
<div class="td num" style="left:342px;top:986.5999999999999px;letter-spacing:-0.037px">2023-00001</div>
<div class="circ" style="top:986.8px;background:#5bc2b4">R</div>
<div class="td" style="left:605px;top:991.8px;letter-spacing:-0.044px">XML</div>
<div class="td" style="left:690.500px;top:986.5999999999999px;letter-spacing:-0.100px">2023-11-08</div>
<div class="td r" style="left:837px;width:174.300px;top:986.5999999999999px">20</div>
<div class="td r" style="left:1021px;width:173.500px;top:986.5999999999999px">21</div>
<div class="bd" style="left:1311px;width:87px;top:986.6999999999999px;letter-spacing:0.515px">2 778 / 0</div>
<div class="td r b" style="left:1408px;width:210.500px;top:986.5999999999999px;letter-spacing:0.140px">22 540,43$</div>
<div class="td" style="left:1921px;top:986.5999999999999px;letter-spacing:0.220px">2023</div>
<div id="hshadow" class="abs"></div>
<!--/TABLE-->
<!--FOOTER-->

<div class="sel" style="left:337px;top:1090.500px;width:75px;height:35.500px;line-height:32.500px;padding-left:16px;font-size:15px">50</div>
<svg class="abs" style="left:394px;top:1104px" width="13" height="9" viewBox="0 0 13 9" fill="none" stroke="#343a40" stroke-width="2" stroke-linecap="round" stroke-linejoin="round"><path d="M1.500 1.800 L6.500 6.800 L11.500 1.800"/></svg>
<div class="td" style="left:429.500px;top:1094.400px;letter-spacing:-0.135px">Affichage de 1 - 7 sur 7</div>
<!--/FOOTER-->
<!--OVERLAY-->

<!-- red arrow annotation -->
<svg class="abs" style="left:410px;top:285px;overflow:visible" width="80" height="60" viewBox="410 285 80 60">
  <defs><filter id="ash" x="-30%" y="-30%" width="170%" height="170%"><feDropShadow dx="2" dy="3.500" stdDeviation="2.200" flood-color="#000" flood-opacity=".5"/></filter></defs>
  <g filter="url(#ash)"><path d="M421.300 327.800 L438.500 299.700 L443.400 307.600 L466.400 293.700 A5.400 5.400 0 0 1 472 303 L449.400 316.800 L454 324.600Z" fill="#f93d42"/></g>
</svg>
<!-- hand cursor -->
<svg class="abs" style="left:398px;top:365.500px" width="21.800" height="25.500" viewBox="0 0 20 25" preserveAspectRatio="none">
  <path d="M7 1.500 C8.200 1.500 8.800 2.300 8.800 3.500 V9.500 C9.500 8.800 11.200 9 11.500 10.200 C12.300 9.500 14 9.800 14.200 11 C15.200 10.500 16.800 11 16.800 12.800 V17 C16.800 20 15.500 21.500 15.200 23.500 H7.500 C6.500 20.500 3.500 18 2 15.500 C1.200 14 2.800 12.800 4 14 L5.200 15.200 V3.500 C5.200 2.300 5.800 1.500 7 1.500Z" fill="#fff" stroke="#111" stroke-width="1.100" stroke-linejoin="round"/>
  <path d="M8.800 9.500 V14 M11.500 10.500 V14 M14.200 11.500 V14.500" stroke="#111" stroke-width="1" fill="none"/>
</svg>
<!--/OVERLAY-->
<div id="edgeL" class="abs"></div>
<div id="edgeR" class="abs"></div>
<div id="edgeB" class="abs"></div>
</body>
</html>
